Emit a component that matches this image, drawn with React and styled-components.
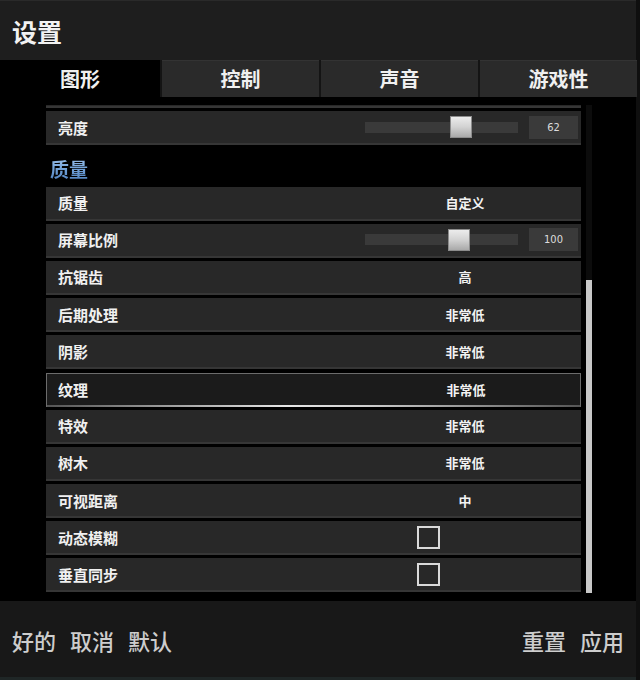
import React from "react";
import styled, { createGlobalStyle } from "styled-components";

const GlobalStyle = createGlobalStyle`
  html, body {
    margin: 0;
    padding: 0;
    background: #0f0f0f;
    font-family: "Noto Sans CJK SC", "Noto Sans", sans-serif;
  }
  * { box-sizing: border-box; }
`;

const Window = styled.div`
  width: 636px;
  height: 680px;
  display: flex;
  flex-direction: column;
  background: #000;
`;

const Header = styled.header`
  height: 60px;
  flex: none;
  display: flex;
  align-items: center;
  padding: 0 0 0 12px;
  background: #1e1e1e;
  border-top: 1px solid #2a2a2a;
  color: #f2f2f2;
  font-size: 25px;
  font-weight: 700;
`;

const TabBar = styled.nav`
  height: 37px;
  flex: none;
  display: grid;
  grid-template-columns: 160px repeat(3, 157px);
  gap: 2px;
  background: #141414;
`;

const Tab = styled.div`
  display: flex;
  align-items: center;
  justify-content: center;
  padding-bottom: 1px;
  background: ${(p) => (p.$active ? "#000" : "#2a2a2a")};
  border-top: 1px solid ${(p) => (p.$active ? "#000" : "#333")};
  color: #f0f0f0;
  font-size: 20px;
  font-weight: 700;
`;

const Body = styled.main`
  flex: 1;
  display: flex;
  align-items: stretch;
  padding: 8px 0 8px 46px;
  background: #000;
  min-height: 0;
`;

const Viewport = styled.div`
  width: 535px;
  overflow: hidden;
`;

const List = styled.div`
  display: flex;
  flex-direction: column;
  gap: 3.2px;
  margin-top: -31px;
`;

const Row = styled.div`
  position: relative;
  height: 34px;
  flex: none;
  display: grid;
  grid-template-columns: 319px 1fr;
  align-items: center;
  background: ${(p) => (p.$selected ? "#1b1b1b" : "#282828")};
  border: ${(p) => (p.$selected ? "1px solid #6c6c6c" : "none")};
  border-bottom: ${(p) => (p.$selected ? "1px solid #6c6c6c" : "2px solid #363636")};
  ${(p) =>
    p.$selected &&
    `
    &::after {
      content: "";
      position: absolute;
      left: 0;
      right: 0;
      bottom: -1px;
      height: 2px;
      background: linear-gradient(90deg, #555 0%, #e6e6e6 45%, #cfcfcf 60%, #555 100%);
    }
  `}
`;

const Label = styled.span`
  padding-left: ${(p) => (p.$selected ? "11px" : "12px")};
  color: #f0f0f0;
  font-size: 15px;
  font-weight: 700;
  white-space: nowrap;
`;

const ValueText = styled.span`
  width: 200px;
  text-align: center;
  color: #f2f2f2;
  font-size: 13px;
  font-weight: 700;
`;

const SliderCell = styled.div`
  display: flex;
  align-items: center;
  gap: 11px;
`;

const Track = styled.div`
  position: relative;
  width: 153px;
  height: 11px;
  background: #3a3a3a;
`;

const Thumb = styled.div`
  position: absolute;
  top: 50%;
  width: 22px;
  height: 22px;
  transform: translateY(-50%);
  background: linear-gradient(180deg, #ececec 0%, #d2d2d2 50%, #a9a9a9 100%);
  border: 1px solid #8c8c8c;
`;

const NumberBox = styled.div`
  width: 49px;
  height: 23px;
  display: flex;
  align-items: center;
  justify-content: center;
  background: #3a3a3a;
  color: #dcdcdc;
  font-family: "DejaVu Sans Condensed", "DejaVu Sans", sans-serif;
  font-stretch: condensed;
  font-size: 11px;
`;

const Checkbox = styled.div`
  width: 23px;
  height: 23px;
  margin-left: 52px;
  border: 2px solid #dadada;
`;

const SectionTitle = styled.div`
  height: 35px;
  flex: none;
  display: flex;
  align-items: center;
  padding: 5px 0 0 4px;
  font-size: 19px;
  font-weight: 700;
  span {
    background: linear-gradient(180deg, #a6c8ee 0%, #6f9fd6 55%, #4f80bc 100%);
    -webkit-background-clip: text;
    background-clip: text;
    color: transparent;
  }
`;

const ScrollTrack = styled.div`
  width: 6px;
  margin-left: 5px;
  padding-top: 175px;
  background: #0c0c0c;
`;

const ScrollThumb = styled.div`
  height: 313px;
  background: #c8c8c8;
`;

const Footer = styled.footer`
  height: 79px;
  flex: none;
  display: flex;
  align-items: center;
  justify-content: space-between;
  padding: 1px 12px 0 12px;
  background: #181818;
  border-bottom: 3px solid #1f2626;
`;

const ButtonGroup = styled.div`
  display: flex;
  gap: 14px;
`;

const FooterButton = styled.span`
  color: #cdcdcd;
  font-size: 22px;
  font-weight: 500;
`;

const THUMB_RANGE = 131;

const Slider = ({ value, pos }) => (
  <SliderCell>
    <Track>
      <Thumb style={{ left: `${Math.round(pos * THUMB_RANGE)}px` }} />
    </Track>
    <NumberBox>{value}</NumberBox>
  </SliderCell>
);

const quality = [
  { label: "质量", text: "自定义" },
  { label: "屏幕比例", slider: { value: 100, pos: 0.634 } },
  { label: "抗锯齿", text: "高" },
  { label: "后期处理", text: "非常低" },
  { label: "阴影", text: "非常低" },
  { label: "纹理", text: "非常低", selected: true },
  { label: "特效", text: "非常低" },
  { label: "树木", text: "非常低" },
  { label: "可视距离", text: "中" },
  { label: "动态模糊", check: true },
  { label: "垂直同步", check: true },
];

const SettingRow = ({ item }) => (
  <Row $selected={item.selected}>
    <Label $selected={item.selected}>{item.label}</Label>
    {item.text && <ValueText>{item.text}</ValueText>}
    {item.slider && <Slider {...item.slider} />}
    {item.check && <Checkbox />}
  </Row>
);

export default function App() {
  return (
    <>
      <GlobalStyle />
      <Window>
        <Header>设置</Header>
        <TabBar>
          <Tab $active>图形</Tab>
          <Tab>控制</Tab>
          <Tab>声音</Tab>
          <Tab>游戏性</Tab>
        </TabBar>
        <Body>
          <Viewport>
            <List>
              <Row aria-hidden="true" />
              <Row>
                <Label>亮度</Label>
                <Slider value={62} pos={0.649} />
              </Row>
              <SectionTitle>
                <span>质量</span>
              </SectionTitle>
              {quality.map((item) => (
                <SettingRow key={item.label} item={item} />
              ))}
            </List>
          </Viewport>
          <ScrollTrack>
            <ScrollThumb />
          </ScrollTrack>
        </Body>
        <Footer>
          <ButtonGroup>
            <FooterButton>好的</FooterButton>
            <FooterButton>取消</FooterButton>
            <FooterButton>默认</FooterButton>
          </ButtonGroup>
          <ButtonGroup>
            <FooterButton>重置</FooterButton>
            <FooterButton>应用</FooterButton>
          </ButtonGroup>
        </Footer>
      </Window>
    </>
  );
}
